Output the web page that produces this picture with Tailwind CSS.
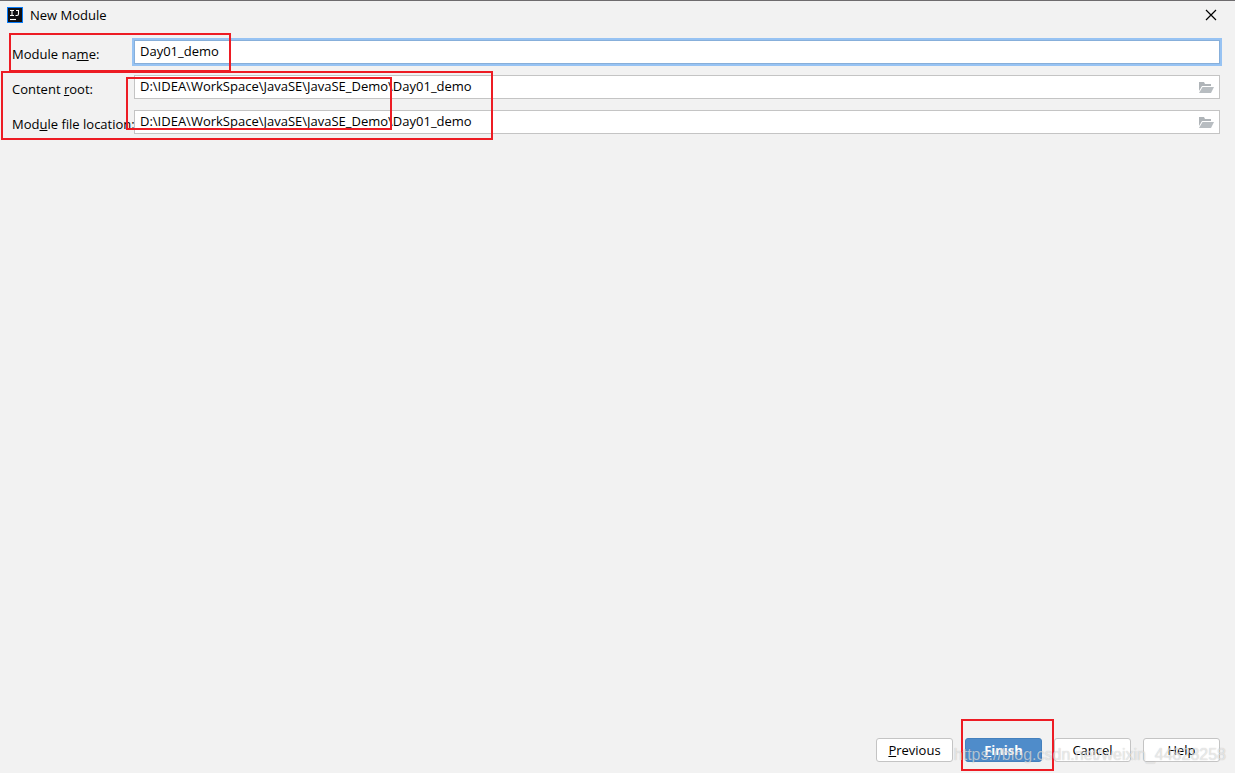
<!DOCTYPE html>
<html lang="en">
<head>
<meta charset="utf-8">
<title>New Module</title>
<script src="https://cdn.jsdelivr.net/npm/@tailwindcss/browser@4"></script>
</head>
<body class="bg-[#f2f2f2] font-['Open_Sans','Noto_Sans',sans-serif] text-[13px] leading-5 text-black">
<div class="relative flex min-h-screen flex-col overflow-hidden border-t border-[#6e6c6e]">
  <header class="flex h-7 items-center pr-[18px] pl-[7px]">
    <svg class="size-4" viewBox="0 0 16 16" aria-hidden="true">
      <rect width="16" height="16" fill="#087cfa"/><rect x="1" y="1" width="14" height="14" fill="#101014"/>
      <path d="M3 3.500h4M5 3.500v5M3 8.500h4M9 3.500h2.500v3.500q0 1.500-1.500 1.500H8.500" fill="none" stroke="#fff" stroke-width="1.1"/>
      <path d="M3 12.500h6" stroke="#fff" stroke-width="1.100"/>
    </svg>
    <h1 class="ml-[7px]">New Module</h1>
    <button class="ml-auto" aria-label="Close">
      <svg class="size-3" viewBox="0 0 12 12"><path d="M1 1l10 10M11 1L1 11" stroke="#000" stroke-width="1.2" fill="none"/></svg>
    </button>
  </header>
  <main class="flex-1 pt-[11px] pr-[15px] pl-3">
    <form class="grid grid-cols-[122px_1fr] gap-y-[11px]">
      <label for="name" class="pt-1 whitespace-nowrap">Module na<u>m</u>e:</label>
      <input id="name" value="Day01_demo" class="h-6 border border-[#87afda] bg-white px-[5px] pb-0.5 ring-2 ring-[#97c3f3] outline-none">
      <label for="root" class="pt-1 whitespace-nowrap">Content <u>r</u>oot:</label>
      <div class="flex h-6 items-center border border-[#c4c4c4] bg-white px-[5px]">
        <input id="root" value="D:\IDEA\WorkSpace\JavaSE\JavaSE_Demo\Day01_demo" class="min-w-0 flex-1 pb-0.5 outline-none">
        <button type="button" aria-label="Browse content root"><svg class="h-3 w-4" viewBox="0 0 16 12"><path d="M1 1h5l1 2h6v2H4L1 10z" fill="#afb4b8"/><path d="M4.500 6H16l-3 6H1z" fill="#b8bdc1"/></svg></button>
      </div>
      <label for="location" class="pt-1 whitespace-nowrap">Mod<u>u</u>le file location:</label>
      <div class="flex h-6 items-center border border-[#c4c4c4] bg-white px-[5px]">
        <input id="location" value="D:\IDEA\WorkSpace\JavaSE\JavaSE_Demo\Day01_demo" class="min-w-0 flex-1 pb-0.5 outline-none">
        <button type="button" aria-label="Browse file location"><svg class="h-3 w-4" viewBox="0 0 16 12"><path d="M1 1h5l1 2h6v2H4L1 10z" fill="#afb4b8"/><path d="M4.500 6H16l-3 6H1z" fill="#b8bdc1"/></svg></button>
      </div>
    </form>
  </main>
  <footer class="flex justify-end gap-3 pr-[15px] pb-[11px]">
    <button class="h-6 w-[77px] rounded-[3px] border border-[#c4c4c4] bg-white"><u>P</u>revious</button>
    <button class="h-6 w-[77px] rounded-[3px] border border-[#4480bd] bg-[#4f8cca] font-bold text-white"><u>F</u>inish</button>
    <button class="h-6 w-[77px] rounded-[3px] border border-[#c4c4c4] bg-white">Cancel</button>
    <button class="h-6 w-[77px] rounded-[3px] border border-[#c4c4c4] bg-white">Help</button>
  </footer>

  <!-- Red annotation frames -->
  <div class="pointer-events-none absolute top-8 left-[9px] h-[39px] w-[222px] border-2 border-[#ed1c24]"></div>
  <div class="pointer-events-none absolute top-[70px] left-px h-[69px] w-[492px] border-2 border-[#ed1c24]"></div>
  <div class="pointer-events-none absolute top-[76px] left-[126px] h-[53px] w-[266px] border-2 border-[#ed1c24]"></div>
  <div class="pointer-events-none absolute right-[181px] bottom-[2px] h-[52px] w-[93px] border-2 border-[#ed1c24]"></div>
  <!-- Watermark -->
  <div class="pointer-events-none absolute right-[9px] bottom-2 font-['Liberation_Sans',sans-serif] text-base leading-5 whitespace-nowrap text-white/60 [text-shadow:0_0_1px_#0004]">https://blog.csdn.net/weixin_44828258</div>
</div>
</body>
</html>
